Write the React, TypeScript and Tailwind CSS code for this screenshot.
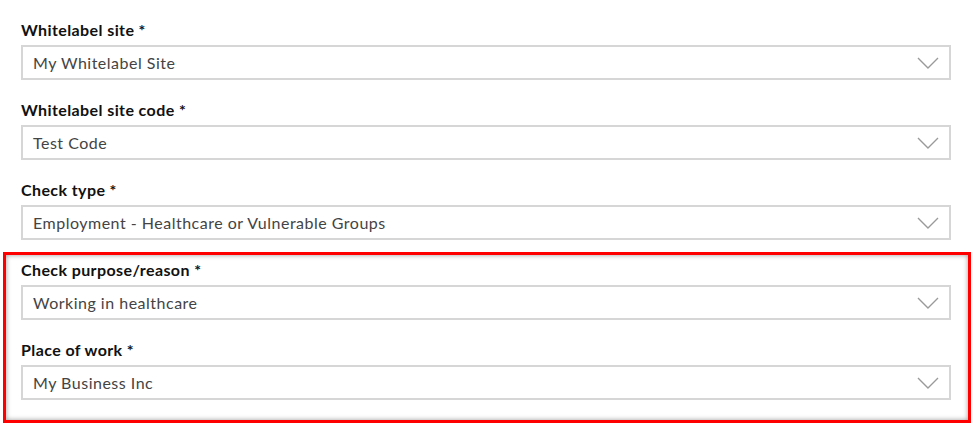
import React from 'react';

type Field = { label: string; value: string };

const topFields: Field[] = [
  { label: 'Whitelabel site *', value: 'My Whitelabel Site' },
  { label: 'Whitelabel site code *', value: 'Test Code' },
  { label: 'Check type *', value: 'Employment - Healthcare or Vulnerable Groups' },
];

const boxedFields: Field[] = [
  { label: 'Check purpose/reason *', value: 'Working in healthcare' },
  { label: 'Place of work *', value: 'My Business Inc' },
];

function Chevron() {
  return (
    <svg width="22" height="12" viewBox="0 0 22 12" fill="none" className="shrink-0">
      <path d="M1 1L11 11L21 1" stroke="#9a9a9a" strokeWidth="1.4" />
    </svg>
  );
}

function SelectField({ label, value }: Field) {
  return (
    <div>
      <div className="h-5 leading-5 text-[16px] tracking-[0.4px] font-bold text-[#111] mb-[5px]">{label}</div>
      <div className="h-[35px] border-2 border-[#d6d6d6] bg-white flex items-center justify-between pl-[10px] pr-[10px]">
        <span className="text-[16px] tracking-[0.5px] text-[#444]">{value}</span>
        <Chevron />
      </div>
    </div>
  );
}

export default function App() {
  return (
    <div
      className="w-[973px] h-[427px] bg-white overflow-hidden"
      style={{ fontFamily: '"Lato", "Open Sans", sans-serif' }}
    >
      <div className="pt-5 pl-[21px] pr-[22px] flex flex-col gap-5">
        {topFields.map((f) => (
          <SelectField key={f.label} {...f} />
        ))}
      </div>
      <div className="mt-3 ml-[3px] mr-[2px] border-[3px] border-[#ff0000] pt-[5px] pb-5 pl-[15px] pr-[17px] flex flex-col gap-5 shadow-[inset_0_0_5px_rgba(0,0,0,0.4)]">
        {boxedFields.map((f) => (
          <SelectField key={f.label} {...f} />
        ))}
      </div>
    </div>
  );
}
